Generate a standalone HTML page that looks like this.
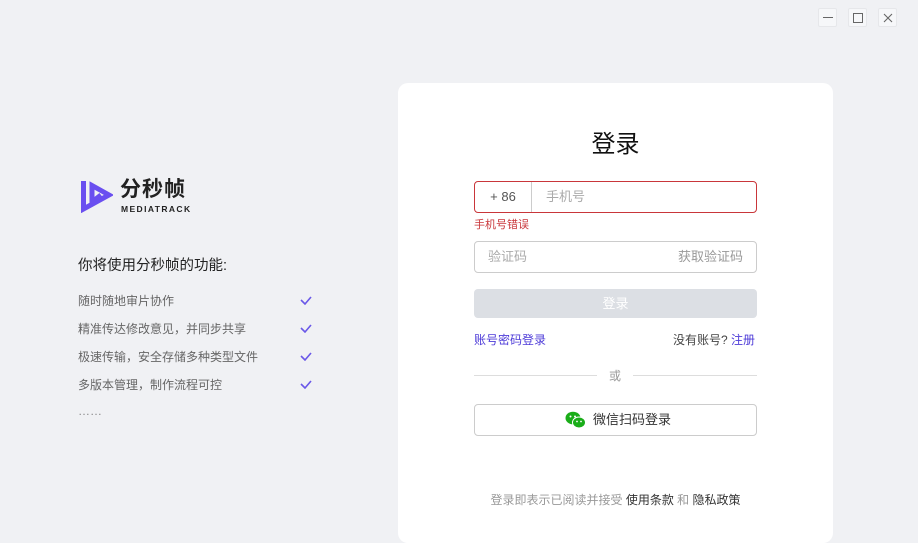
<!DOCTYPE html>
<html><head><meta charset="utf-8"><style>
*{margin:0;padding:0;box-sizing:border-box}
body{width:918px;height:526px;overflow:hidden;background:#f0f1f4;font-family:"Liberation Sans","Noto Sans CJK SC",sans-serif;position:relative;color:#333}
.a{position:absolute}
.wb{position:absolute;top:8px;width:19px;height:19px;background:#f6f7f9;border:1px solid #e6e7ea;border-radius:2px}
.card{position:absolute;left:398px;top:83px;width:435px;height:460px;background:#fff;border-radius:10px}
.feat{position:absolute;left:78px;font-size:12px;color:#666;}
.chk{position:absolute;left:300px}
</style></head><body>
<div class="wb" style="left:818px"><div class="a" style="left:4px;top:8px;width:10px;height:1px;background:#666"></div></div>
<div class="wb" style="left:848px"><div class="a" style="left:4px;top:4px;width:10px;height:10px;border:1.3px solid #666"></div></div>
<div class="wb" style="left:878px"><svg class="a" style="left:4px;top:4px" width="10" height="10"><path d="M1 1L9 9M9 1L1 9" stroke="#666" stroke-width="1.1"/></svg></div>

<svg class="a" style="left:79px;top:178px" width="34" height="35" viewBox="0 0 34 35">
<path d="M4.5 3V31L30 17L13 7.5V24L22 17" fill="none" stroke="#6a4ff0" stroke-width="5" stroke-linejoin="miter"/></svg>
<div class="a" style="left:120px;top:178px;font-size:21px;font-weight:bold;color:#222;letter-spacing:1px;line-height:24px">分秒帧</div>
<div class="a" style="left:121px;top:204px;font-size:8.5px;font-weight:bold;color:#222;letter-spacing:1.4px">MEDIATRACK</div>
<div class="a" style="left:78px;top:254px;font-size:14.5px;color:#222">你将使用分秒帧的功能:</div>
<div class="feat" style="top:292px">随时随地审片协作</div>
<div class="feat" style="top:320px">精准传达修改意见，并同步共享</div>
<div class="feat" style="top:348px">极速传输，安全存储多种类型文件</div>
<div class="feat" style="top:376px">多版本管理，制作流程可控</div>
<div class="feat" style="top:404px;color:#888">……</div>
<svg class="chk" style="top:296px" width="12" height="9"><path d="M1 4L5 8L11 1" stroke="#6a58e8" stroke-width="1.6" fill="none"/></svg>
<svg class="chk" style="top:324px" width="12" height="9"><path d="M1 4L5 8L11 1" stroke="#6a58e8" stroke-width="1.6" fill="none"/></svg>
<svg class="chk" style="top:352px" width="12" height="9"><path d="M1 4L5 8L11 1" stroke="#6a58e8" stroke-width="1.6" fill="none"/></svg>
<svg class="chk" style="top:380px" width="12" height="9"><path d="M1 4L5 8L11 1" stroke="#6a58e8" stroke-width="1.6" fill="none"/></svg>

<div class="card"></div>
<div class="a" style="left:398px;width:435px;top:124px;text-align:center;font-size:24px;color:#111">登录</div>
<div class="a" style="left:474px;top:181px;width:283px;height:32px;border:1px solid #c9363a;border-radius:4px">
 <div class="a" style="left:0;top:0;width:57px;height:30px;border-right:1px solid #ccc;text-align:center;line-height:30px;font-size:13px;color:#555">+ 86</div>
 <div class="a" style="left:71px;top:0;line-height:30px;font-size:13px;color:#aaa">手机号</div>
</div>
<div class="a" style="left:474px;top:216px;font-size:11px;color:#c9363a">手机号错误</div>
<div class="a" style="left:474px;top:241px;width:283px;height:32px;border:1px solid #ccc;border-radius:4px">
 <div class="a" style="left:13px;line-height:30px;font-size:13px;color:#aaa">验证码</div>
 <div class="a" style="right:13px;line-height:30px;font-size:13px;color:#999">获取验证码</div>
</div>
<div class="a" style="left:474px;top:289px;width:283px;height:29px;background:#dcdfe4;border-radius:4px;text-align:center;line-height:29px;color:#fff;font-size:13px">登录</div>
<div class="a" style="left:474px;top:331px;font-size:12px;color:#4d3bd8">账号密码登录</div>
<div class="a" style="left:673px;top:331px;font-size:12px;color:#444">没有账号? <span style="color:#4d3bd8">注册</span></div>
<div class="a" style="left:474px;top:375px;width:123px;height:1px;background:#ddd"></div>
<div class="a" style="left:633px;top:375px;width:124px;height:1px;background:#ddd"></div>
<div class="a" style="left:609px;top:367px;font-size:12px;color:#999">或</div>
<div class="a" style="left:474px;top:404px;width:283px;height:32px;border:1px solid #ccc;border-radius:4px">
 <svg class="a" style="left:90px;top:6px" width="21" height="18" viewBox="0 0 21 18"><ellipse cx="8" cy="7" rx="7.5" ry="6.3" fill="#1aad19"/><ellipse cx="14" cy="11.5" rx="6.5" ry="5.5" fill="#1aad19" stroke="#fff" stroke-width="1"/><circle cx="5.5" cy="5.5" r="1" fill="#fff"/><circle cx="10" cy="5.5" r="1" fill="#fff"/><circle cx="12" cy="10.5" r=".9" fill="#fff"/><circle cx="16" cy="10.5" r=".9" fill="#fff"/></svg>
 <div class="a" style="left:118px;line-height:30px;font-size:13px;color:#333">微信扫码登录</div>
</div>
<div class="a" style="left:398px;width:435px;top:491px;text-align:center;font-size:12px;color:#999">登录即表示已阅读并接受 <span style="color:#333">使用条款</span> 和 <span style="color:#333">隐私政策</span></div>
</body></html>
